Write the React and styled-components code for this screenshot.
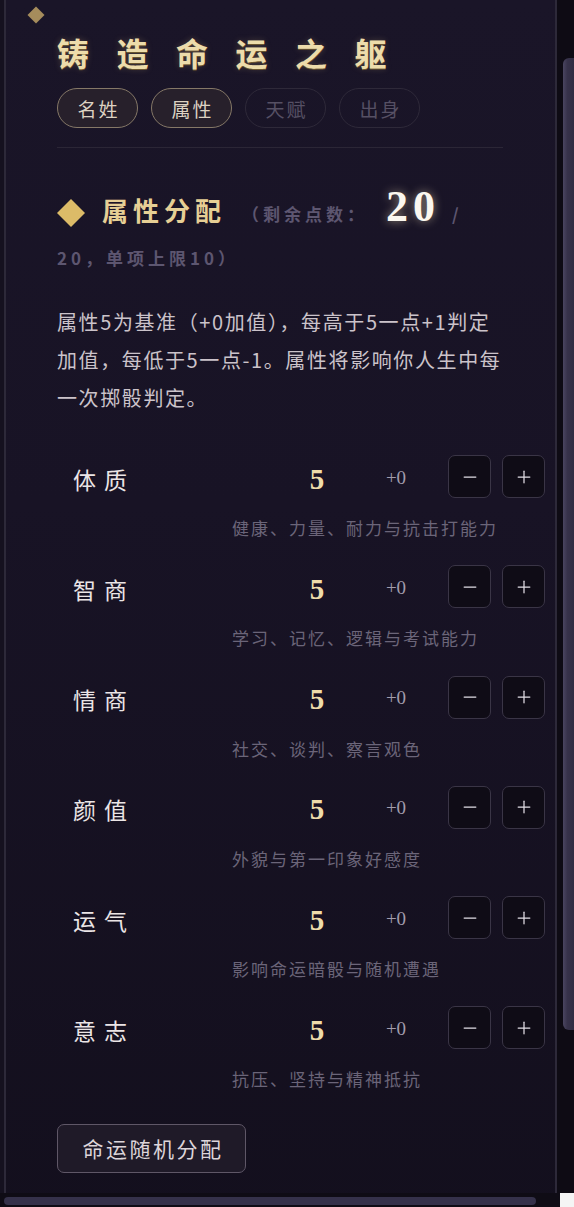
import React from 'react';
import styled, { createGlobalStyle } from 'styled-components';
import { Minus, Plus } from 'lucide-react';

const GlobalStyle = createGlobalStyle`
  html, body {
    margin: 0;
    padding: 0;
    background: #15111f;
  }
  body {
    width: 574px;
    height: 1207px;
    overflow: hidden;
    font-family: "Noto Sans CJK SC", "Noto Sans", sans-serif;
  }
`;

const CJK = `"Noto Sans CJK SC", "Noto Sans", sans-serif`;
const SERIF = `"Liberation Serif", "DejaVu Serif", serif`;

const Frame = styled.div`
  display: flex;
  flex-direction: column;
  width: 574px;
  height: 1207px;
`;

const TopArea = styled.div`
  display: flex;
  height: 1193px;
`;

const Viewport = styled.div`
  width: 557px;
  height: 1193px;
  overflow: hidden;
  background: #15111f;
`;

const Panel = styled.section`
  position: relative;
  margin-left: 4px;
  width: 553px;
  box-sizing: border-box;
  min-height: 1260px;
  padding: 32px 0 0 51px;
  border-left: 2px solid #2d2939;
  border-right: 2px solid #2d2939;
  background: linear-gradient(180deg, #1a1528 0%, #181325 40%, #130f1d 100%);
`;

const CornerGem = styled.span`
  position: absolute;
  left: 24px;
  top: 9px;
  width: 12px;
  height: 12px;
  background: #a58c5c;
  transform: rotate(45deg);
`;

const Title = styled.h1`
  margin: 0;
  font-family: ${CJK};
  font-size: 32px;
  line-height: 40px;
  font-weight: 700;
  letter-spacing: 27.5px;
  color: #eddcab;
  text-shadow: 0 1px 0 #6b5630, 0 0 6px rgba(230, 200, 130, 0.25);
  white-space: nowrap;
`;

const Tabs = styled.nav`
  display: flex;
  gap: 13px;
  margin-top: 16px;
`;

const Tab = styled.div`
  box-sizing: border-box;
  width: 81px;
  height: 40px;
  display: flex;
  align-items: center;
  justify-content: center;
  border-radius: 20px;
  font-family: ${CJK};
  font-size: 19px;
  letter-spacing: 2px;
  padding-left: 2px;
  border: 1.5px solid ${(p) => (p.$on ? '#857867' : '#2e2939')};
  background: ${(p) => (p.$on ? '#27202b' : 'transparent')};
  color: ${(p) => (p.$on ? '#ddd2c2' : '#565064')};
`;

const Divider = styled.hr`
  margin: 19px 0 0 0;
  width: 446px;
  height: 1px;
  border: 0;
  background: #2b2636;
`;

const Heading = styled.h2`
  margin: 44px 0 0 0;
  width: 446px;
  font-family: ${CJK};
  font-weight: 700;
  font-size: 17px;
  line-height: 44px;
`;

const HeadGem = styled.svg`
  display: inline-block;
  width: 28px;
  height: 28px;
  vertical-align: -6px;
  margin-right: 17px;
`;

const HeadTitle = styled.span`
  font-size: 26px;
  line-height: 0;
  letter-spacing: 5px;
  color: #e6cf95;
`;

const HeadNote = styled.span`
  font-size: 17px;
  letter-spacing: 4px;
  color: #5d5670;
  margin-left: ${(p) => (p.$lead ? '16px' : '0')};
`;

const PointsLeft = styled.span`
  font-family: ${SERIF};
  font-size: 44px;
  line-height: 0;
  letter-spacing: 5px;
  color: #fbf7ef;
  text-shadow: 0 0 10px rgba(255, 236, 190, 0.55);
  margin: 0 12px 0 18px;
`;

const Intro = styled.p`
  margin: 23px 0 0 0;
  width: 450px;
  font-family: ${CJK};
  font-size: 20px;
  letter-spacing: 1.6px;
  line-height: 38px;
  color: #cbc3ca;
`;

const StatList = styled.div`
  display: flex;
  flex-direction: column;
  gap: 26.3px;
  margin: 38px 0 0 16px;
  width: 472px;
`;

const StatRow = styled.div`
  display: grid;
  grid-template-columns: 214px 60px 98px 1fr;
  grid-template-rows: 43px auto;
  align-items: center;
`;

const StatName = styled.span`
  font-family: ${CJK};
  font-size: 23px;
  letter-spacing: 8px;
  color: #ebe5e6;
  padding-top: 4px;
`;

const StatValue = styled.span`
  text-align: center;
  font-family: ${SERIF};
  font-weight: 700;
  font-size: 29px;
  color: #efdcaa;
  padding-top: 5px;
`;

const StatBonus = styled.span`
  text-align: center;
  font-family: ${SERIF};
  font-size: 19px;
  color: #a29cac;
  padding-top: 2px;
`;

const Steppers = styled.div`
  display: flex;
  gap: 11px;
  justify-self: end;
`;

const StepButton = styled.button`
  box-sizing: border-box;
  width: 43px;
  height: 43px;
  display: flex;
  align-items: center;
  justify-content: center;
  padding: 0;
  border-radius: 7px;
  border: 1px solid #3a3546;
  background: #0f0c16;
  color: #e2dee6;
`;

const StatHint = styled.span`
  grid-column: 1 / -1;
  margin-top: 19px;
  padding-left: 159px;
  font-family: ${CJK};
  font-size: 17px;
  letter-spacing: 2px;
  line-height: 22px;
  color: #6b6579;
`;

const RandomButton = styled.button`
  box-sizing: border-box;
  margin-top: 33.5px;
  height: 49px;
  width: 189px;
  padding: 0 0 0 3px;
  border-radius: 7px;
  border: 1.5px solid #5f5767;
  background: #1f1a28;
  font-family: ${CJK};
  font-size: 21px;
  letter-spacing: 2.5px;
  color: #ddd5da;
`;

const VTrack = styled.div`
  width: 17px;
  background: #0e0b14;
  display: flex;
  flex-direction: column;
  align-items: flex-end;
`;

const VThumb = styled.div`
  margin-top: 58px;
  width: 11px;
  height: 972px;
  border-radius: 6px 0 0 6px;
  background: linear-gradient(90deg, #4a4560 0%, #37324a 40%, #302c42 100%);
`;

const BottomArea = styled.div`
  display: flex;
  height: 14px;
`;

const HTrack = styled.div`
  flex: 1;
  background: #0f0c15;
  padding: 4px 0 0 4px;
`;

const HThumb = styled.div`
  width: 532px;
  height: 8px;
  border-radius: 4px;
  background: #35314a;
`;

const Corner = styled.div`
  width: 14px;
  background: #f5f5f5;
`;

const stats = [
  { name: '体质', hint: '健康、力量、耐力与抗击打能力' },
  { name: '智商', hint: '学习、记忆、逻辑与考试能力' },
  { name: '情商', hint: '社交、谈判、察言观色' },
  { name: '颜值', hint: '外貌与第一印象好感度' },
  { name: '运气', hint: '影响命运暗骰与随机遭遇' },
  { name: '意志', hint: '抗压、坚持与精神抵抗' },
];

const tabs = [
  { label: '名姓', on: true },
  { label: '属性', on: true },
  { label: '天赋', on: false },
  { label: '出身', on: false },
];

export default function App() {
  return (
    <>
      <GlobalStyle />
      <Frame>
        <TopArea>
          <Viewport>
            <Panel>
              <CornerGem />
              <Title>铸造命运之躯</Title>
              <Tabs>
                {tabs.map((t) => (
                  <Tab key={t.label} $on={t.on}>
                    {t.label}
                  </Tab>
                ))}
              </Tabs>
              <Divider />
              <Heading>
                <HeadGem viewBox="0 0 28 28">
                  <polygon points="14,0 28,14 14,28 0,14" fill="#dcbb68" />
                </HeadGem>
                <HeadTitle>属性分配</HeadTitle>
                <HeadNote $lead>（剩余点数：</HeadNote>
                <PointsLeft>20</PointsLeft>
                <HeadNote>/</HeadNote>{' '}
                <HeadNote>20，单项上限10）</HeadNote>
              </Heading>
              <Intro>
                属性5为基准（+0加值），每高于5一点+1判定加值，每低于5一点-1。属性将影响你人生中每一次掷骰判定。
              </Intro>
              <StatList>
                {stats.map((s) => (
                  <StatRow key={s.name}>
                    <StatName>{s.name}</StatName>
                    <StatValue>5</StatValue>
                    <StatBonus>+0</StatBonus>
                    <Steppers>
                      <StepButton aria-label="减少">
                        <Minus size={20} strokeWidth={1.5} />
                      </StepButton>
                      <StepButton aria-label="增加">
                        <Plus size={20} strokeWidth={1.5} />
                      </StepButton>
                    </Steppers>
                    <StatHint>{s.hint}</StatHint>
                  </StatRow>
                ))}
              </StatList>
              <RandomButton>命运随机分配</RandomButton>
            </Panel>
          </Viewport>
          <VTrack>
            <VThumb />
          </VTrack>
        </TopArea>
        <BottomArea>
          <HTrack>
            <HThumb />
          </HTrack>
          <Corner />
        </BottomArea>
      </Frame>
    </>
  );
}
